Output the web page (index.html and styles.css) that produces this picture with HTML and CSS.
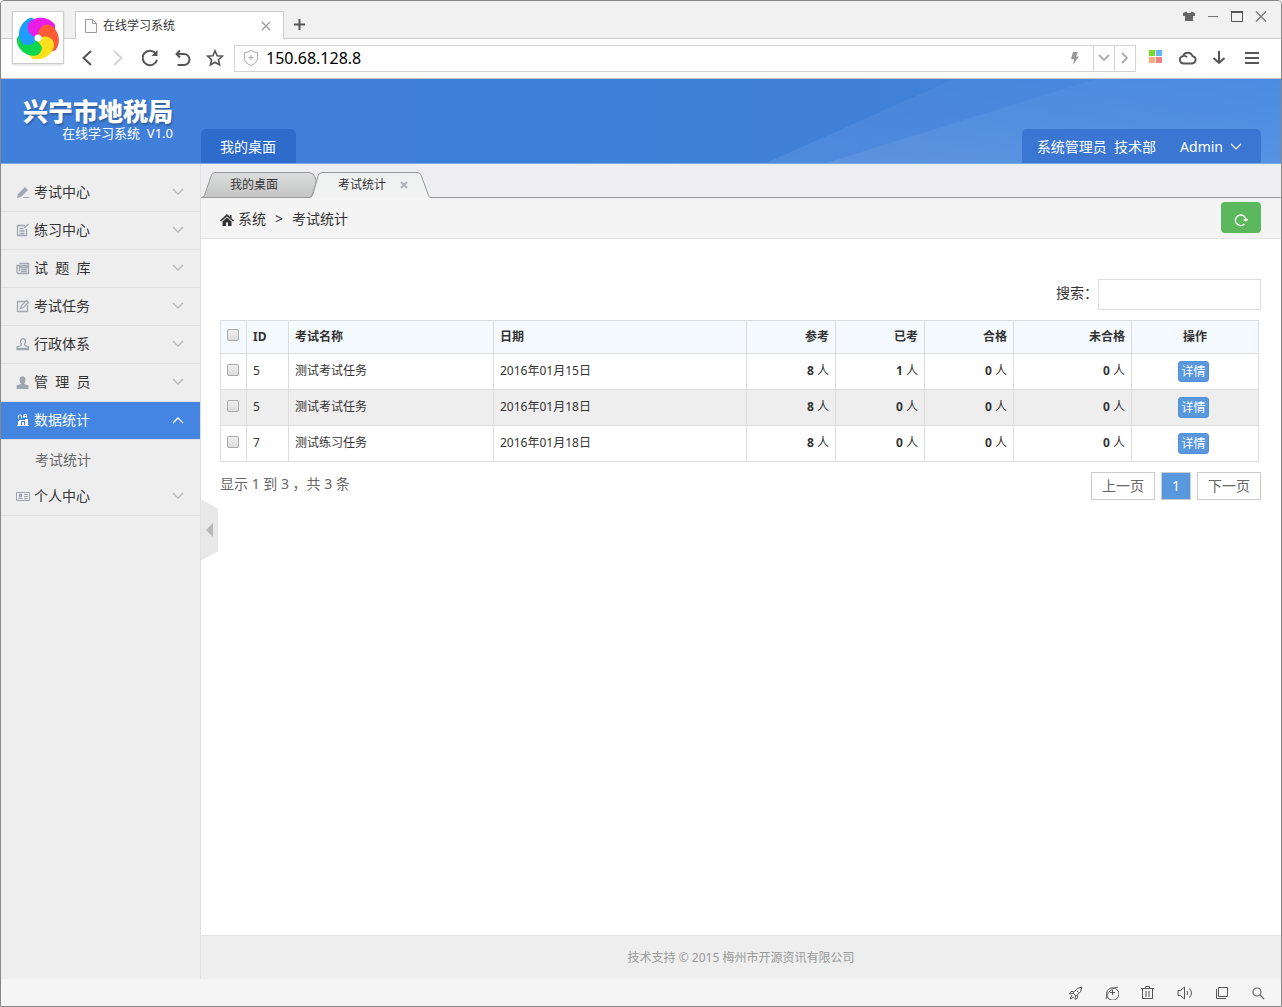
FILE: index.html
```html
<!DOCTYPE html>
<html lang="zh-CN">
<head>
<meta charset="utf-8">
<title>在线学习系统</title>
<link rel="stylesheet" href="styles.css">
</head>
<body>
<div class="window">
  <div class="chrome">
    <div class="logo-box">
      <svg width="42" height="42" viewBox="-21 -21 42 42" aria-hidden="true">
        <defs>
          <path id="petal" d="M0-1C-5 0-12-6-10-13C-6-22 10-23 17-13L17-8C9-12 3-8 2-1Z"/>
          <clipPath id="half"><path d="M-25-25H2V0H-25Z"/></clipPath>
        </defs>
        <use href="#petal" fill="#ffe01e" transform="rotate(144)"/>
        <use href="#petal" fill="#0cd64c" transform="rotate(216)"/>
        <use href="#petal" fill="#1e9cff" transform="rotate(288)"/>
        <use href="#petal" fill="#e81de8"/>
        <use href="#petal" fill="#ff5a36" transform="rotate(72)"/>
        <g transform="rotate(144)"><use href="#petal" fill="#ffe01e" clip-path="url(#half)"/></g>
        <circle r="3.500" fill="#fff"/>
      </svg>
    </div>
    <div class="tab-strip">
      <div class="page-tab">
        <svg width="12" height="14" viewBox="0 0 12 14" fill="#fafafa" stroke="#999"><path d="M.5.5h7l4 4v9H.5zM7.500 .5v4h4"/></svg>
        <span class="page-tab-title">在线学习系统</span>
        <button class="plain" aria-label="关闭标签"><svg width="10" height="10" viewBox="0 0 10 10" stroke="#999" stroke-width="1.300"><path d="M1 1l8 8M9 1L1 9"/></svg></button>
      </div>
      <button class="plain new-tab" aria-label="新标签"><svg width="11" height="11" viewBox="0 0 11 11" stroke="#555" stroke-width="2"><path d="M5.500 0v11M0 5.500h11"/></svg></button>
      <div class="window-controls">
        <button class="plain" aria-label="皮肤"><svg width="12" height="11" viewBox="0 0 12 11" fill="#666"><path d="M3.500.5 0 2v3h2v5h8V5h2V2L8.500.5 7.500 2h-3z"/></svg></button>
        <button class="plain" aria-label="最小化"><svg width="12" height="11" viewBox="0 0 12 11" stroke="#777"><path d="M1 5.500h10"/></svg></button>
        <button class="plain" aria-label="最大化"><svg width="12" height="11" viewBox="0 0 12 11" fill="none" stroke="#555"><path d="M.5 1.500h11v9H.5zM0 1.500h12" /><path d="M0 1h12" stroke-width="2"/></svg></button>
        <button class="plain" aria-label="关闭"><svg width="12" height="11" viewBox="0 0 12 11" stroke="#777" stroke-width="1.200"><path d="M1 .5l10 10M11 .5l-10 10"/></svg></button>
      </div>
    </div>
    <div class="toolbar">
      <div class="nav-buttons">
        <button class="plain" aria-label="后退"><svg width="18" height="18" viewBox="0 0 18 18" fill="none" stroke="#555" stroke-width="2"><path d="M13 2L5.500 9l7.500 7"/></svg></button>
        <button class="plain" aria-label="前进"><svg width="18" height="18" viewBox="0 0 18 18" fill="none" stroke="#d4d4d4" stroke-width="2"><path d="M4 2l7.500 7L4 16"/></svg></button>
        <button class="plain" aria-label="刷新"><svg width="18" height="18" viewBox="0 0 18 18" fill="none" stroke="#555" stroke-width="2"><path d="M15 11A7.300 7.300 0 1 1 13.500 4.200"/><path d="M15.500 1v6h-6z" fill="#555" stroke="none"/></svg></button>
        <button class="plain" aria-label="撤销"><svg width="18" height="18" viewBox="0 0 18 18" fill="none" stroke="#555" stroke-width="2"><path d="M6 1.500L2.500 5 6 8.500M3 5h7a5 5 0 0 1 0 11H3.500"/></svg></button>
        <button class="plain" aria-label="收藏"><svg width="18" height="18" viewBox="0 0 18 18" fill="none" stroke="#555" stroke-width="1.600"><path d="M9 1.800l2.100 4.900 5.300.5-4 3.500 1.200 5.200L9 13.200l-4.600 2.700 1.200-5.200-4-3.500 5.300-.5z"/></svg></button>
      </div>
      <div class="address">
        <svg class="shield" width="14" height="16" viewBox="0 0 14 16" fill="none" stroke="#aaa"><path d="M.5 2.500q4 0 6.500-2 2.500 2 6.500 2v6q0 4-6.500 7-6.500-3-6.500-7zM7 5v5M4.500 7.500h5"/></svg>
        <input class="address-input" type="text" value="150.68.128.8" aria-label="地址">
        <svg class="bolt" width="10" height="13" viewBox="0 0 10 13" fill="#999"><path d="M3 0h5L6 4.500h3L3 13l1.200-6H1z"/></svg>
        <button class="plain address-button" aria-label="展开"><svg width="12" height="8" viewBox="0 0 12 8" fill="none" stroke="#aaa" stroke-width="1.800"><path d="M1 1l5 5 5-5"/></svg></button>
        <button class="plain address-button" aria-label="转到"><svg width="8" height="12" viewBox="0 0 8 12" fill="none" stroke="#aaa" stroke-width="1.800"><path d="M1 1l5 5-5 5"/></svg></button>
      </div>
      <div class="tools">
        <button class="plain" aria-label="应用"><svg width="18" height="18" viewBox="0 0 18 18"><path d="M2 1h6v6H2z" fill="#79dc24"/><path d="M9 1h6v6H9z" fill="#62b4ff"/><path d="M2 8h6v6H2z" fill="#ffaa7b"/><path d="M9 8h6v6H9z" fill="#f07f85"/></svg></button>
        <button class="plain" aria-label="云同步"><svg width="18" height="18" viewBox="0 0 18 18" fill="none" stroke="#555" stroke-width="1.800"><path d="M5 14.500a4 3.700 0 0 1-1-7.300 5 5 0 0 1 9.500 0 4 3.700 0 0 1-.5 7.300zM4 7.200q2.500-1 4 1"/></svg></button>
        <button class="plain" aria-label="下载"><svg width="18" height="18" viewBox="0 0 18 18" fill="none" stroke="#555" stroke-width="2"><path d="M8 2v12M2.500 9L8 14l5.500-5"/></svg></button>
        <button class="plain" aria-label="菜单"><svg width="18" height="18" viewBox="0 0 18 18" stroke="#555" stroke-width="2"><path d="M2 4h14M2 9h14M2 14h14"/></svg></button>
      </div>
    </div>
  </div>

  <header class="banner">
    <svg class="banner-art" viewBox="0 0 865 84" preserveAspectRatio="none" aria-hidden="true">
      <defs>
        <linearGradient id="sky" x1="0" x2="1"><stop offset="0" stop-color="#3d80d9"/><stop offset=".5" stop-color="#4080d9"/><stop offset="1" stop-color="#4387e0"/></linearGradient>
        <linearGradient id="ray" x1="0" x2="1" y1="1" y2="0"><stop offset="0" stop-color="#fff" stop-opacity=".08"/><stop offset="1" stop-color="#fff" stop-opacity=".02"/></linearGradient>
      </defs>
      <rect width="865" height="84" fill="url(#sky)"/>
      <path d="M350 84L538 0H865V84Z" fill="url(#ray)"/>
      <path d="M410 84L680 0H865V84Z" fill="url(#ray)"/>
    </svg>
    <div class="brand">
      <h1 class="brand-name">兴宁市地税局</h1>
      <p class="brand-sub">在线学习系统&nbsp; V1.0</p>
    </div>
    <a class="banner-tab" href="#">我的桌面</a>
    <div class="user-box">
      <span>系统管理员&nbsp; 技术部</span>
      <button class="plain user-menu">Admin <svg width="12" height="8" viewBox="0 0 12 8" fill="none" stroke="#fff" stroke-width="1.200"><path d="M1 1l5 5 5-5"/></svg></button>
    </div>
  </header>

  <div class="body">
    <nav class="sidebar">
      <button class="menu-item"><svg width="14" height="14" viewBox="0 0 14 14" fill="#a0a7b2"><path d="M1 13l1-4 7-7 3 3-7 7z"/><path d="M7 12h6v1H7z"/></svg><span>考试中心</span><svg class="arrow" width="12" height="8" viewBox="0 0 12 8"><path d="M1 1l5 5 5-5"/></svg></button>
      <button class="menu-item"><svg width="14" height="14" viewBox="0 0 14 14" fill="none" stroke="#a0a7b2" stroke-width="1.300"><path d="M9 2.500H1.500v10h9V6M3.500 5.500h4M3.500 8h5M3.500 10.500h5M8 5l4.500-4"/></svg><span>练习中心</span><svg class="arrow" width="12" height="8" viewBox="0 0 12 8"><path d="M1 1l5 5 5-5"/></svg></button>
      <button class="menu-item"><svg width="14" height="14" viewBox="0 0 14 14" fill="none" stroke="#a0a7b2" stroke-width="1.300"><path d="M3.500 2.500h9v10h-10q-1.500 0-1.500-2V4.500h2.500v6M5 8.500h6M5 10.500h6"/><path d="M5 4.500h6v2H5z"/></svg><span>试&nbsp; 题&nbsp; 库</span><svg class="arrow" width="12" height="8" viewBox="0 0 12 8"><path d="M1 1l5 5 5-5"/></svg></button>
      <button class="menu-item"><svg width="14" height="14" viewBox="0 0 14 14" fill="none" stroke="#a0a7b2" stroke-width="1.300"><path d="M9 2.500H1.500v10h10V6"/><path d="M4.500 9.500l1-3 5-5 2 2-5 5z"/></svg><span>考试任务</span><svg class="arrow" width="12" height="8" viewBox="0 0 12 8"><path d="M1 1l5 5 5-5"/></svg></button>
      <button class="menu-item"><svg width="14" height="14" viewBox="0 0 14 14" fill="none" stroke="#a0a7b2" stroke-width="1.300"><path d="M5 8.500q1-1.500-.5-3.500c0-4.500 5-4.500 5 0q-1.500 2-.5 3.500l3.500 1.500v2.500H1V10zM1 11.500h11"/></svg><span>行政体系</span><svg class="arrow" width="12" height="8" viewBox="0 0 12 8"><path d="M1 1l5 5 5-5"/></svg></button>
      <button class="menu-item"><svg width="14" height="14" viewBox="0 0 14 14" fill="#a0a7b2"><path d="M5 9Q3.500 7 3.500 4.500C3.500 0 9.500 0 9.500 4.500Q9.500 7 8 9l4.500 1.500V14H.5v-3.500z"/></svg><span>管&nbsp; 理&nbsp; 员</span><svg class="arrow" width="12" height="8" viewBox="0 0 12 8"><path d="M1 1l5 5 5-5"/></svg></button>
      <button class="menu-item active" aria-expanded="true"><svg width="14" height="14" viewBox="0 0 14 14" fill="#fff"><path d="M1 12h12v1H1zM2 8h3v4H2zM6 9h2v3H6zM9 6h3v6H9z"/><path d="M2.500 5.500V3L4 1.500 5.500 3v2.500M8 5V1.500h2.500V5M7 3.500h4M3 7.500h8" fill="none" stroke="#fff"/></svg><span>数据统计</span><svg class="arrow" width="12" height="8" viewBox="0 0 12 8"><path d="M1 7l5-5 5 5"/></svg></button>
      <a class="submenu-item" href="#">考试统计</a>
      <button class="menu-item"><svg width="14" height="14" viewBox="0 0 14 14" fill="none" stroke="#a0a7b2"><path d="M.5 3.500h13v8H.5zM2.500 9.500h4M8 5.500h4M8 7.500h4M8 9.500h4"/><path d="M3.500 5h2v3h-2z" fill="#a0a7b2"/></svg><span>个人中心</span><svg class="arrow" width="12" height="8" viewBox="0 0 12 8"><path d="M1 1l5 5 5-5"/></svg></button>
    </nav>

    <main class="main">
      <button class="collapse" aria-label="收起侧栏"><svg width="7" height="14" viewBox="0 0 7 14" fill="#b8b8b8"><path d="M7 0v14L0 7z"/></svg></button>
      <div class="work-tabs">
        <a class="work-tab" href="#">
          <svg class="tab-shape" width="116" height="26" viewBox="0 0 116 26" aria-hidden="true"><defs><linearGradient id="tabgray" x2="0" y2="1"><stop stop-color="#dcdddd"/><stop offset="1" stop-color="#c4c4c5"/></linearGradient></defs><path d="M0 25.500Q2 25 3 22L9 4Q10 .5 13 .5H107Q111 .5 112.500 4L114 8V12L110 23Q109 25.500 107 25.500Z" fill="url(#tabgray)" stroke="#999"/></svg>
          <span>我的桌面</span>
        </a>
        <div class="work-tab current">
          <svg class="tab-shape" width="120" height="27" viewBox="0 0 120 27" aria-hidden="true"><defs><linearGradient id="tablight" x2="0" y2="1"><stop stop-color="#eff1f1"/><stop offset="1" stop-color="#f2f2f2"/></linearGradient></defs><path d="M0 25.500Q2 25 3 22L8 4Q9 .5 12 .5H107Q110 .5 111 3L118 22Q119 25 120 25.500V27H0Z" fill="url(#tablight)"/><path d="M0 25.500Q2 25 3 22L8 4Q9 .5 12 .5H107Q110 .5 111 3L118 22Q119 25 120 25.500" fill="none" stroke="#999"/></svg>
          <span>考试统计</span>
          <button class="plain tab-close" aria-label="关闭"><svg width="8" height="8" viewBox="0 0 8 8" stroke="#aeb3bb" stroke-width="2"><path d="M1 1l6 6M7 1L1 7"/></svg></button>
        </div>
      </div>
      <div class="crumbs">
        <svg width="14" height="14" viewBox="0 0 14 14" fill="#333"><path d="M7 2L0 8.500l1 1L7 4.500l6 5 1-1-2.500-2V3H10v2zM7 5.500L2.500 9.500V14H6v-3.500h2V14h3.500V9.500z"/></svg>
        <a href="#">系统</a><span class="sep">&gt;</span><span>考试统计</span>
        <button class="refresh" aria-label="刷新"><svg width="14" height="14" viewBox="0 0 14 14" fill="none" stroke="#fff" stroke-width="1.300"><path d="M10.500 11A5.300 5.300 0 1 1 12 7.500M9.500 6.500L12 8l1.800-2"/></svg></button>
      </div>
      <section class="content">
        <div class="search">
          <label for="q">搜索：</label><input id="q" class="search-input" type="text">
        </div>
        <table class="data">
          <colgroup><col class="c-check"><col class="c-id"><col class="c-name"><col><col class="c-num"><col class="c-num"><col class="c-num"><col class="c-fail"><col class="c-op"></colgroup>
          <thead>
            <tr><th class="check"><input type="checkbox" aria-label="全选"></th><th>ID</th><th>考试名称</th><th>日期</th><th class="num">参考</th><th class="num">已考</th><th class="num">合格</th><th class="num">未合格</th><th class="op">操作</th></tr>
          </thead>
          <tbody>
            <tr><td class="check"><input type="checkbox" aria-label="选择"></td><td>5</td><td>测试考试任务</td><td>2016年01月15日</td><td class="num"><b>8</b> 人</td><td class="num"><b>1</b> 人</td><td class="num"><b>0</b> 人</td><td class="num"><b>0</b> 人</td><td class="op"><button class="detail">详情</button></td></tr>
            <tr><td class="check"><input type="checkbox" aria-label="选择"></td><td>5</td><td>测试考试任务</td><td>2016年01月18日</td><td class="num"><b>8</b> 人</td><td class="num"><b>0</b> 人</td><td class="num"><b>0</b> 人</td><td class="num"><b>0</b> 人</td><td class="op"><button class="detail">详情</button></td></tr>
            <tr><td class="check"><input type="checkbox" aria-label="选择"></td><td>7</td><td>测试练习任务</td><td>2016年01月18日</td><td class="num"><b>8</b> 人</td><td class="num"><b>0</b> 人</td><td class="num"><b>0</b> 人</td><td class="num"><b>0</b> 人</td><td class="op"><button class="detail">详情</button></td></tr>
          </tbody>
        </table>
        <div class="table-foot">
          <span>显示 1 到 3 ，共 3 条</span>
          <div class="pager"><a href="#">上一页</a><a class="on" href="#">1</a><a href="#">下一页</a></div>
        </div>
      </section>
      <footer class="footer">技术支持 © 2015 梅州市开源资讯有限公司</footer>
    </main>
  </div>

  <div class="status">
    <button class="plain" aria-label="加速"><svg width="14" height="14" viewBox="0 0 14 14" fill="none" stroke="#555"><path d="M4 7Q8 1 13 1q0 5-6 9zM4.500 5.500H2L.5 8l3.500-.5M8.500 9.500V12L6 13.500l.5-3.500M3 9l-2 4 4-2M8 5l1.500 1.500M4 7l3 3"/></svg></button>
    <button class="plain" aria-label="浏览器医生"><svg width="14" height="14" viewBox="0 0 14 14" fill="none" stroke="#555"><path d="M3 12A6 6 0 1 1 12.500 4M3 12A6 6 0 0 0 12.500 4M1 13C2 6 7 2 13 1M5 6.500h5M7.500 4v5"/></svg></button>
    <button class="plain" aria-label="清理"><svg width="14" height="14" viewBox="0 0 14 14" fill="none" stroke="#555"><path d="M0 2.500h13M4.500 2.500v-2h4v2M1.500 2.500v10h10v-10M5 5v6M8 5v6"/></svg></button>
    <button class="plain" aria-label="声音"><svg width="16" height="14" viewBox="0 0 16 14" fill="none" stroke="#555"><path d="M1 4.500h2.500L7.500 1v12L3.500 9.500H1zM10 5q1.500 2 0 4M12.500 2.500q4 4.500 0 9"/></svg></button>
    <button class="plain" aria-label="窗口"><svg width="14" height="14" viewBox="0 0 14 14" fill="none" stroke="#555"><path d="M3.500 1.500h9v9h-9zM1.500 3v9.500H11"/></svg></button>
    <button class="plain" aria-label="缩放"><svg width="14" height="14" viewBox="0 0 14 14" fill="none" stroke="#666" stroke-width="1.200"><circle cx="6" cy="6" r="4"/><path d="M9 9l4 4"/></svg></button>
  </div>
</div>
</body>
</html>
```
FILE: styles.css
```css
* { box-sizing: border-box; }

body {
  margin: 0;
  font-family: "Noto Sans", "Noto Sans CJK SC", sans-serif;
  font-size: 14px;
  line-height: 20px;
  color: #333;
}

a { color: inherit; text-decoration: none; }
svg { display: block; flex: none; }
button, input { font: inherit; color: inherit; }
.plain { border: 0; padding: 0; background: none; display: flex; align-items: center; }

.window {
  min-height: 100vh;
  display: flex;
  flex-direction: column;
  border: 1px solid #888;
  border-radius: 4px 4px 0 0;
  overflow: hidden;
  background: #f1f1f1;
}

/* browser chrome */
.chrome { position: relative; border-bottom: 1px solid #c4c4c4; }
.tab-strip {
  display: flex;
  align-items: flex-end;
  height: 38px;
  padding-left: 74px;
  border-bottom: 1px solid #ccc;
  background: #f1f1f1;
}
.page-tab {
  display: flex;
  align-items: center;
  width: 209px;
  height: 28px;
  margin-bottom: -1px;
  padding: 0 12px 0 9px;
  gap: 6px;
  border: 1px solid #ccc;
  border-bottom: 0;
  background: #fff;
  font-size: 12px;
}
.page-tab-title { flex: 1; }
.new-tab { height: 27px; margin-left: 10px; }
.window-controls {
  display: flex;
  gap: 12px;
  align-self: flex-start;
  margin-left: auto;
  padding: 10px 14px 0 0;
}
.logo-box {
  position: absolute;
  left: 11px;
  top: 10px;
  display: grid;
  place-items: center;
  width: 52px;
  height: 53px;
  border: 1px solid #ccc;
  background: #fff;
  box-shadow: 0 1px 2px #0002;
}
.toolbar {
  display: flex;
  align-items: center;
  height: 39px;
  padding: 0 20px 1px 77px;
  background: #fff;
}
.nav-buttons { display: flex; gap: 14px; margin-right: 10px; }
.address {
  display: flex;
  align-items: center;
  flex: 1;
  height: 27px;
  border: 1px solid #d4d4d4;
}
.shield { margin: 0 8px 0 9px; }
.address-input {
  flex: 1;
  min-width: 0;
  padding: 0;
  border: 0;
  outline: 0;
  background: none;
  font-size: 16px;
  line-height: 24px;
  color: #000;
}
.bolt { margin-right: 13px; }
.address-button {
  justify-content: center;
  width: 21px;
  height: 25px;
  border-left: 1px solid #d4d4d4;
}
.tools { display: flex; gap: 14px; margin-left: 11px; }

/* banner */
.banner {
  position: relative;
  display: flex;
  align-items: flex-end;
  height: 85px;
  border-bottom: 1px solid #78a9ea;
  background: #4080da;
  color: #fff;
}
.banner-art { position: absolute; right: 0; top: 0; width: 865px; height: 100%; }
.brand {
  align-self: flex-start;
  width: 200px;
  padding: 18px 28px 0 0;
  text-align: right;
}
.brand-name {
  margin: 0;
  font-size: 25px;
  line-height: 28px;
  font-weight: 900;
  text-shadow: 1px 2px 2px #0004;
}
.brand-sub { margin: 0; font-size: 13px; line-height: 16px; }
.banner-tab {
  padding: 8px 20px 6px 19px;
  border-radius: 5px 5px 0 0;
  background: #2e6ccb;
}
.user-box {
  position: relative;
  display: flex;
  gap: 24px;
  margin-left: auto;
  margin-right: 20px;
  padding: 8px 19px 6px 15px;
  border-radius: 5px 5px 0 0;
  background: #3a76d2;
}
.user-menu { gap: 7px; }

/* layout */
.body { display: flex; flex: 1; }
.sidebar {
  width: 200px;
  flex: none;
  padding-top: 10px;
  border-right: 1px solid #e0e0e0;
  background: #eee;
}
.menu-item {
  display: flex;
  align-items: center;
  gap: 4px;
  width: 100%;
  height: 38px;
  padding: 0 16px 2px 15px;
  border: 0;
  border-bottom: 1px solid #e0e0e0;
  background: none;
  text-align: left;
}
.menu-item.active { background: #4385e0; color: #fff; }
.arrow { margin-left: auto; fill: none; stroke: #b8b8b8; stroke-width: 1.3; }
.active .arrow { stroke: #fff; }
.submenu-item {
  display: block;
  height: 38px;
  padding: 10px 0 0 34px;
  color: #666;
}

.main {
  position: relative;
  display: flex;
  flex-direction: column;
  flex: 1;
  min-width: 0;
  background: #fff;
}
.collapse {
  position: absolute;
  left: 0;
  top: calc(50% - 72px);
  display: flex;
  align-items: center;
  width: 17px;
  height: 61px;
  padding: 0 0 0 5px;
  border: 0;
  background: #e8e8e8;
  clip-path: polygon(0 0, 100% 9px, 100% 52px, 0 100%);
}

.work-tabs {
  display: flex;
  align-items: flex-end;
  height: 34px;
  padding-left: 1px;
  border-bottom: 1px solid #999;
  background: #eeeef0;
}
.work-tab {
  position: relative;
  display: flex;
  align-items: center;
  width: 116px;
  height: 26px;
  margin-bottom: -1px;
  padding-left: 28px;
  font-size: 12px;
}
.work-tab.current { width: 120px; margin-left: -8px; }
.work-tab > span, .tab-close { position: relative; }
.tab-close { margin-left: 14px; }
.tab-shape { position: absolute; left: 0; top: 0; }

.crumbs {
  display: flex;
  align-items: center;
  height: 41px;
  padding: 1px 20px 0 19px;
  border-bottom: 1px solid #e4e4e4;
  background: #f4f4f4;
}
.crumbs a { margin-left: 4px; }
.sep { margin: 0 9px; }
.refresh {
  display: grid;
  place-items: center;
  align-self: flex-start;
  margin-top: 3px;
  width: 40px;
  height: 31px;
  padding: 4px 0 0;
  margin-left: auto;
  border: 0;
  border-radius: 4px;
  background: #5cb85c;
}

.content { flex: 1; padding: 40px 20px 20px 19px; }
.search {
  display: flex;
  align-items: center;
  justify-content: flex-end;
  margin-bottom: 10px;
}
.search label { padding-bottom: 3px; }
.search-input { width: 163px; height: 31px; padding: 0 6px; border: 1px solid #ddd; }

.data {
  width: calc(100% - 2px);
  table-layout: fixed;
  border-collapse: separate;
  border-spacing: 0;
  border: solid #ddd;
  border-width: 1px 0 0 1px;
  font-size: 12px;
}
.c-check { width: 26px; }
.c-id { width: 42px; }
.c-name { width: 205px; }
.c-num { width: 89px; }
.c-fail { width: 118px; }
.c-op { width: 127px; }
.data th, .data td {
  height: 36px;
  padding: 0 6px;
  border: solid #ddd;
  border-width: 0 1px 1px 0;
  text-align: left;
}
.data td { padding-bottom: 2px; }
.data th { height: 33px; background: #f5fafe; }
.data .check { padding-bottom: 4px; }
.data tbody tr:nth-child(even) { background: #eee; }
.data .num { text-align: right; }
.data .op { text-align: center; }
.data td.op { padding: 0 9px 0 6px; }
.data input {
  appearance: none;
  display: block;
  width: 12px;
  height: 12px;
  margin: 0;
  border: 1px solid #aaa;
  border-radius: 2px;
  background: linear-gradient(#eee, #ddd);
}
.detail {
  padding: 0 2px;
  border: 1px solid #4f90d9;
  border-radius: 3px;
  background: #5a98de;
  color: #fff;
  line-height: 19px;
}

.table-foot { display: flex; justify-content: space-between; margin-top: 10px; line-height: 24px; color: #666; }
.pager { display: flex; gap: 6px; }
.pager a { padding: 1px 10px; border: 1px solid #ccc; }
.pager .on { background: #5a98de; color: #fff; }

.footer {
  height: 44px;
  border-top: 1px solid #e4e4e4;
  background: #eee;
  font-size: 12px;
  line-height: 44px;
  text-align: center;
  color: #999;
}

.status {
  display: flex;
  align-items: center;
  justify-content: flex-end;
  gap: 22px;
  height: 27px;
  padding-right: 16px;
  background: #f5f5f5;
}
```
